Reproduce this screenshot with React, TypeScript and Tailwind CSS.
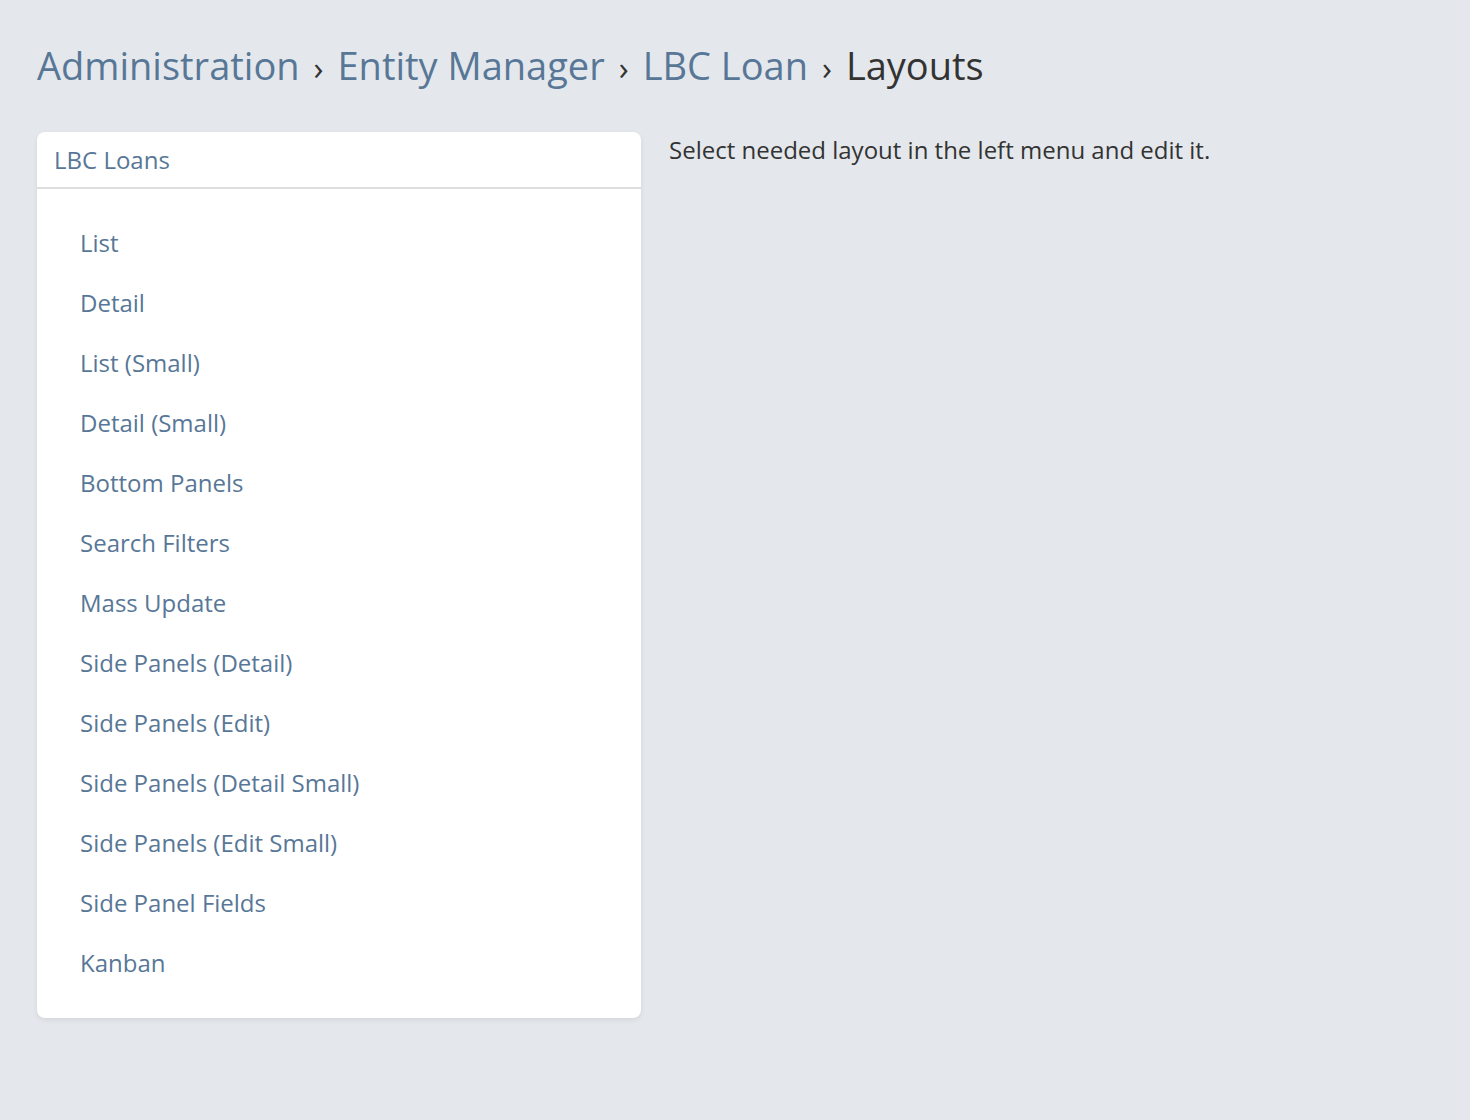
const items = [
  "List",
  "Detail",
  "List (Small)",
  "Detail (Small)",
  "Bottom Panels",
  "Search Filters",
  "Mass Update",
  "Side Panels (Detail)",
  "Side Panels (Edit)",
  "Side Panels (Detail Small)",
  "Side Panels (Edit Small)",
  "Side Panel Fields",
  "Kanban",
];

const crumbs = ["Administration", "Entity Manager", "LBC Loan"];

export default function App() {
  return (
    <div className="min-h-screen bg-[#e4e8ec] px-[37px] pt-[40px] font-['Open_Sans',sans-serif]">
      {/* Breadcrumb */}
      <h3 className="text-[38px] leading-[50px] text-[#333]">
        {crumbs.map((c) => (
          <span key={c}>
            <a href="#" className="text-[#587797]">{c}</a>
            <span className="mx-[14px] text-[33px]">›</span>
          </span>
        ))}
        <span>Layouts</span>
      </h3>

      <div className="mt-[39px] flex items-start gap-[28px]">
        {/* Left menu */}
        <div className="w-[604px] shrink-0 rounded-[8px] bg-white shadow-[0_2px_5px_rgba(0,0,0,0.08)]">
          <div className="flex h-[57px] items-center border-b-2 border-[#dedfe0] pl-[17px] text-[24px] text-[#587797]">
            LBC Loans
          </div>
          <ul className="pt-[24px] pb-[25px]">
            {items.map((it) => (
              <li key={it} className="flex h-[60px] items-center pl-[43px] text-[24px] text-[#587797]">
                <a href="#">{it}</a>
              </li>
            ))}
          </ul>
        </div>

        {/* Content */}
        <p className="pt-[4px] text-[24px] leading-[28px] text-[#333]">
          Select needed layout in the left menu and edit it.
        </p>
      </div>
    </div>
  );
}
